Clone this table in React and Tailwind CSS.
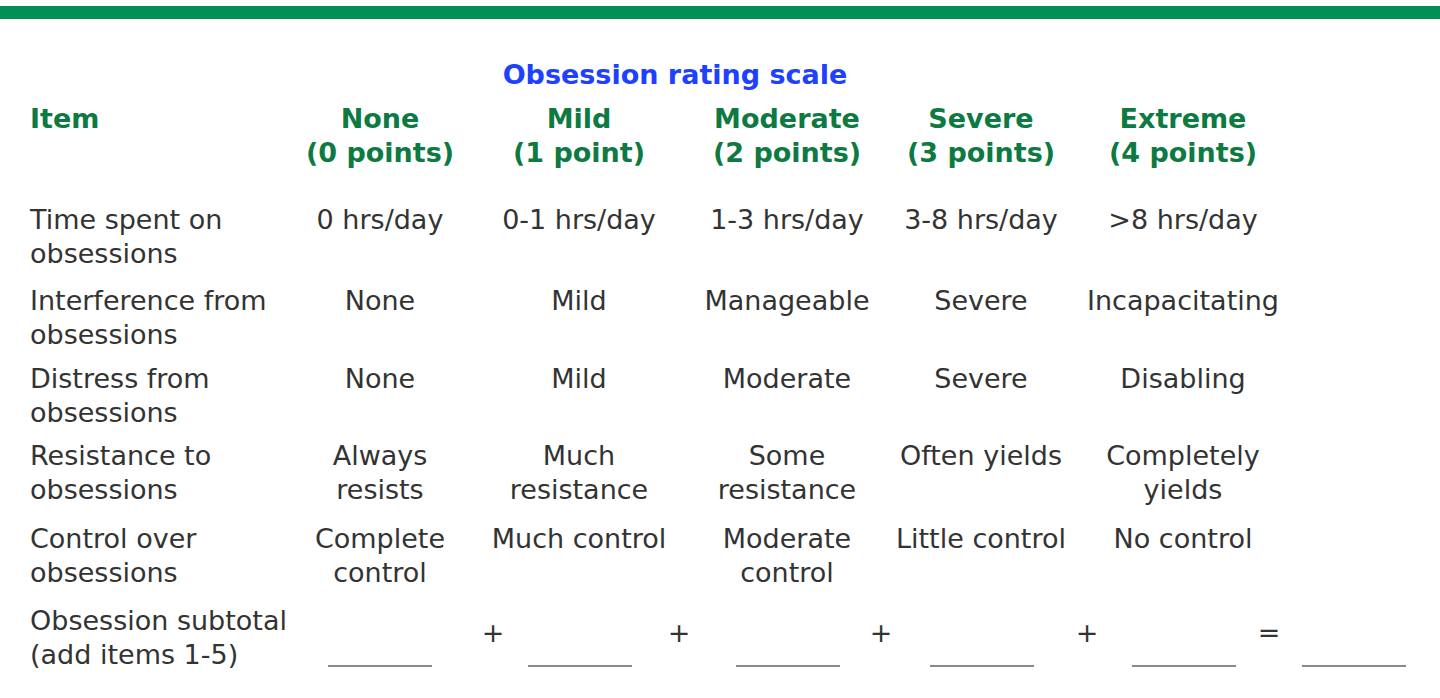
import React from "react";

const COLS = "grid grid-cols-[260px_180px_218px_198px_190px_214px_128px]";

const HEADERS = [
  ["None", "(0 points)"],
  ["Mild", "(1 point)"],
  ["Moderate", "(2 points)"],
  ["Severe", "(3 points)"],
  ["Extreme", "(4 points)"],
];

const ROWS = [
  {
    label: ["Time spent on", "obsessions"],
    cells: [["0 hrs/day"], ["0-1 hrs/day"], ["1-3 hrs/day"], ["3-8 hrs/day"], [">8 hrs/day"]],
    mt: "mt-[33px]",
  },
  {
    label: ["Interference from", "obsessions"],
    cells: [["None"], ["Mild"], ["Manageable"], ["Severe"], ["Incapacitating"]],
    mt: "mt-[13px]",
  },
  {
    label: ["Distress from", "obsessions"],
    cells: [["None"], ["Mild"], ["Moderate"], ["Severe"], ["Disabling"]],
    mt: "mt-[10px]",
  },
  {
    label: ["Resistance to", "obsessions"],
    cells: [
      ["Always", "resists"],
      ["Much", "resistance"],
      ["Some", "resistance"],
      ["Often yields"],
      ["Completely", "yields"],
    ],
    mt: "mt-[9px]",
  },
  {
    label: ["Control over", "obsessions"],
    cells: [
      ["Complete", "control"],
      ["Much control"],
      ["Moderate", "control"],
      ["Little control"],
      ["No control"],
    ],
    mt: "mt-[15px]",
  },
];

const Lines = ({ lines }) =>
  lines.map((l, i) => (
    <div key={i} className="whitespace-nowrap">
      {l}
    </div>
  ));

const Blank = () => <div className="h-[63px] border-b-2 border-[#8a8a8a]" />;

const Op = ({ sign, extra = "" }) => (
  <div className={`flex justify-center pt-[12px] ${extra}`}>{sign}</div>
);

export default function App() {
  return (
    <div
      className="w-[1440px] h-[698px] bg-white overflow-hidden text-[27px] leading-[34px] text-[#333]"
      style={{ fontFamily: '"DejaVu Sans", Verdana, sans-serif' }}
    >
      {/* top rule */}
      <div className="mt-[6px] h-[13px] bg-[#008f57]" />

      {/* title */}
      <div className="mt-[39px] w-[1350px] text-center font-bold text-[#2040ff]">
        Obsession rating scale
      </div>

      <div className="pl-[30px]">
        {/* header */}
        <div className={`${COLS} mt-[10px] font-bold text-[#0d7a42]`}>
          <div>Item</div>
          {HEADERS.map((h) => (
            <div key={h[0]} className="flex flex-col items-center text-center">
              <Lines lines={h} />
            </div>
          ))}
          <div />
        </div>

        {/* rows */}
        {ROWS.map((row) => (
          <div key={row.label[0]} className={`${COLS} ${row.mt}`}>
            <div>
              <Lines lines={row.label} />
            </div>
            {row.cells.map((c, i) => (
              <div key={i} className="flex flex-col items-center text-center">
                <Lines lines={c} />
              </div>
            ))}
            <div />
          </div>
        ))}

        {/* subtotal */}
        <div className="mt-[14px] grid grid-cols-[298px_104px_96px_104px_104px_104px_90px_104px_98px_104px_66px_104px]">
          <div>
            <Lines lines={["Obsession subtotal", "(add items 1-5)"]} />
          </div>
          <Blank />
          <Op sign="+" extra="pl-[26px]" />
          <Blank />
          <Op sign="+" extra="pr-[10px]" />
          <Blank />
          <Op sign="+" extra="pr-[8px]" />
          <Blank />
          <Op sign="+" extra="pl-[8px]" />
          <Blank />
          <Op sign="=" />
          <Blank />
        </div>
      </div>
    </div>
  );
}
